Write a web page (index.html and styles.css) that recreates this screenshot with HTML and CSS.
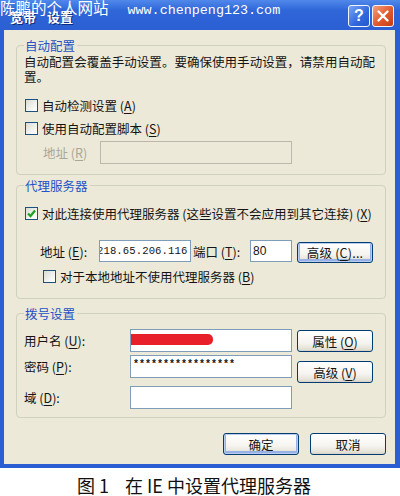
FILE: index.html
```html
<!DOCTYPE html>
<html lang="zh-CN">
<head>
<meta charset="utf-8">
<title>宽带 设置</title>
<link rel="stylesheet" href="styles.css">
</head>
<body>
<div class="window">
  <div class="titlebar">
    <span class="title"><span>宽带</span><span class="title-2">设置</span></span>
    <div class="tb-buttons">
      <span class="tb-btn help">?</span>
      <span class="tb-btn close"><svg width="14" height="14" viewBox="0 0 14 14"><path d="M2.5 2.5 L11.5 11.5 M11.5 2.5 L2.5 11.5" stroke="#fff" stroke-width="2.4" stroke-linecap="round"/></svg></span>
    </div>
    <div class="watermark"><span>陈鹏的个人网站</span><span class="url">www.chenpeng123.com</span></div>
  </div>
  <div class="client">
    <fieldset class="group g1">
      <legend>自动配置</legend>
      <p class="desc"><span class="desc-l1">自动配置会覆盖手动设置。要确保使用手动设置，请禁用自动配</span><span class="desc-l2">置。</span></p>
      <div class="check c1"><span class="box"></span><span>自动检测设置 (<u>A</u>)</span></div>
      <div class="check c2"><span class="box"></span><span>使用自动配置脚本 (<u>S</u>)</span></div>
      <div class="addr-row">
        <span class="lbl disabled">地址 (<u>R</u>)</span>
        <span class="field field-disabled"></span>
      </div>
    </fieldset>

    <fieldset class="group g2">
      <legend>代理服务器</legend>
      <div class="check"><span class="box checked"><svg width="11" height="11" viewBox="0 0 11 11"><path d="M2 5.5 L4.5 8 L9 2.5" fill="none" stroke="#21a121" stroke-width="2.2"/></svg></span><span>对此连接使用代理服务器 (这些设置不会应用到其它连接) (<u>X</u>)</span></div>
      <div class="proxy-row">
        <span class="lbl lbl-addr">地址 (<u>E</u>):</span>
        <span class="field field-ip"><span class="ip">218.65.206.116</span></span>
        <span class="lbl lbl-port">端口 (<u>T</u>):</span>
        <span class="field field-port">80</span>
        <span class="btn btn-default btn-adv">高级 (<u>C</u>)...</span>
      </div>
      <div class="check c-bypass"><span class="box"></span><span>对于本地地址不使用代理服务器 (<u>B</u>)</span></div>
    </fieldset>

    <fieldset class="group g3">
      <legend>拨号设置</legend>
      <div class="dial">
        <div class="dial-fields">
          <div class="dial-row r1">
            <span class="lbl dial-lbl">用户名 (<u>U</u>):</span>
            <span class="field dial-field"><span class="redact"></span></span>
          </div>
          <div class="dial-row r2">
            <span class="lbl dial-lbl">密码 (<u>P</u>):</span>
            <span class="field dial-field"><span class="pw">*****************</span></span>
          </div>
          <div class="dial-row r3">
            <span class="lbl dial-lbl">域 (<u>D</u>):</span>
            <span class="field dial-field"></span>
          </div>
        </div>
        <div class="dial-buttons">
          <span class="btn">属性 (<u>O</u>)</span>
          <span class="btn">高级 (<u>V</u>)</span>
        </div>
      </div>
    </fieldset>

    <div class="footer">
      <span class="btn btn-default">确定</span>
      <span class="btn">取消</span>
    </div>
  </div>
</div>
<div class="caption"><span>图 1</span><span class="cap-rest">在 IE 中设置代理服务器</span></div>
</body>
</html>
```
FILE: styles.css
```css
* { box-sizing: border-box; }

body {
  margin: 0;
  background: #fff;
  font-family: "Noto Sans CJK SC", "Liberation Sans", sans-serif;
  font-size: 12.5px;
  color: #141414;
}

u { text-decoration: underline; text-underline-offset: 2px; }

.window {
  width: 400px;
  background: #2b5ed2;
  padding: 0 5px 4px 4px;
}

.titlebar {
  position: relative;
  height: 30px;
  margin: 0 -5px 0 -4px;
  padding: 0 6px 0 10px;
  display: flex;
  align-items: center;
  background: linear-gradient(#5088ea, #2f66d8 35%, #2b5fd3);
}

.title {
  flex: 1;
  margin-top: 3px;
  color: #fff;
  font-weight: 700;
  font-size: 13px;
  text-shadow: 1px 1px 0 #0c2c80;
}

.title-2 { margin-left: 11px; }

.tb-buttons {
  display: flex;
  gap: 2px;
  margin-top: 2px;
}

.tb-btn {
  width: 22px;
  height: 22px;
  border: 1px solid #f2f4fb;
  border-radius: 3px;
  display: flex;
  align-items: center;
  justify-content: center;
}

.help {
  background: linear-gradient(135deg, #79a4f5, #2f67dc 60%, #2558cc);
  color: #fff;
  font: 700 16px "Liberation Sans", sans-serif;
}

.close {
  background: linear-gradient(135deg, #f3a07e, #e0582c 55%, #c63d16);
}

.watermark {
  position: absolute;
  left: 0;
  top: -3px;
  color: #fff;
  font-size: 15.5px;
  line-height: 20px;
  white-space: pre;
}

.watermark .url {
  font-family: "Liberation Mono", monospace;
  font-size: 13.4px;
  margin-left: 19px;
}

.client {
  background: #ECE9D8;
  padding: 8px 9px 9px 12px;
}

.group {
  margin: 0;
  min-width: 0;
  border: 1px solid #D0D0BF;
  border-radius: 4px;
}

.group legend {
  color: #2452c6;
  line-height: 15px;
  padding: 0 2px 0 1px;
  margin-left: 0;
}

.g1 { padding: 1px 8px 11px 7px; }
.g2 { margin-top: 3px; padding: 11px 8px 13px 7px; }
.g3 { margin-top: 7px; padding: 8px 8px 8px 7px; }

.desc {
  margin: 0;
  line-height: 15px;
}

.desc-l1 {
  display: block;
  width: 351px;
  white-space: nowrap;
  text-align: justify;
  text-align-last: justify;
}

.desc-l2 { display: block; }

.check {
  display: flex;
  align-items: center;
  height: 18px;
  gap: 4px;
  padding-left: 1px;
}

.c1 { margin-top: 12px; }
.c2 { margin-top: 5px; }
.c-bypass { margin-top: 5px; padding-left: 19px; }

.box {
  width: 13px;
  height: 13px;
  flex: none;
  border: 1px solid #1c5180;
  background: linear-gradient(135deg, #dcdcd5, #f6f6f3 70%, #fff);
  display: flex;
  align-items: center;
  justify-content: center;
}

.field {
  display: flex;
  align-items: center;
  background: #fff;
  border: 1px solid #7f9db9;
  overflow: hidden;
  white-space: nowrap;
}

.field-disabled {
  background: #ECE9D8;
  border-color: #b9b8ab;
}

.lbl { white-space: nowrap; flex: none; }
.disabled { color: #a9a797; }

.addr-row {
  display: flex;
  align-items: center;
  height: 22px;
  margin-top: 4px;
}

.addr-row .lbl { width: 76px; padding-left: 19px; }
.addr-row .field { width: 192px; height: 23px; }

.proxy-row {
  display: flex;
  align-items: center;
  height: 22px;
  margin-top: 18px;
}

.lbl-addr { width: 75px; padding-left: 16px; }
.field-ip { width: 92px; height: 22px; }
.ip {
  font-family: "Liberation Mono", monospace;
  font-size: 10.6px;
  margin-left: -3px;
  letter-spacing: 0.1px;
}
.lbl-port { width: 59px; padding-left: 2px; }
.field-port {
  width: 42px;
  height: 22px;
  padding-left: 2px;
  font-family: "Liberation Sans", sans-serif;
  font-size: 12px;
}

.btn {
  width: 76px;
  height: 22px;
  flex: none;
  display: flex;
  align-items: center;
  justify-content: center;
  border: 1px solid #003c74;
  border-radius: 3px;
  background: linear-gradient(#ffffff, #f5f4ef 60%, #e4e1d6 90%, #d6d0c5);
  white-space: nowrap;
}

.btn-default {
  box-shadow: inset 0 0 0 1px #b9cdf0, inset 0 -1px 0 2px #98b1e4;
}

.btn-adv {
  margin-left: 5px;
  margin-top: 3px;
  height: 21px;
  letter-spacing: 0.2px;
}

.dial { display: flex; }

.dial-row {
  display: flex;
  align-items: center;
  height: 23px;
}
.r2 { margin-top: 3px; }
.r3 { margin-top: 8px; }

.dial-lbl { width: 106px; }
.dial-field { width: 162px; height: 23px; align-items: flex-start; }

.redact {
  width: 82px;
  height: 11px;
  margin-top: 4px;
  background: #e8202a;
  border-radius: 0 5px 5px 0;
}

.pw {
  margin-top: 3px;
  padding-left: 2px;
  font-family: "Liberation Mono", monospace;
  font-size: 10px;
  font-weight: 700;
  letter-spacing: 0;
}

.dial-buttons {
  display: flex;
  flex-direction: column;
  gap: 9px;
  margin-left: 5px;
  padding-top: 1px;
}

.footer {
  display: flex;
  justify-content: flex-end;
  gap: 11px;
  margin-top: 15px;
}

.caption {
  margin-top: 7px;
  padding-left: 77px;
  font-size: 18px;
  line-height: 20px;
  color: #111;
  white-space: pre;
}

.cap-rest { margin-left: 16px; }
```
